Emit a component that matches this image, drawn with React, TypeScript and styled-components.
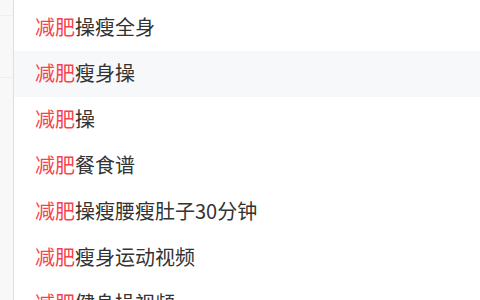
import React from "react";
import styled, { createGlobalStyle } from "styled-components";

const GlobalStyle = createGlobalStyle`
  html, body {
    margin: 0;
    padding: 0;
    background: #ffffff;
  }
  body {
    font-family: "Noto Sans CJK SC", "Noto Sans", sans-serif;
  }
`;

const Page = styled.div`
  display: flex;
  width: 480px;
  height: 300px;
  overflow: hidden;
`;

const SideStrip = styled.div`
  width: 13px;
  flex-shrink: 0;
  display: flex;
  flex-direction: column;
  background: #f8f8f9;
  border-right: 1px solid #dedfe2;
`;

const SideLine = styled.div<{ $h: number }>`
  height: ${(p) => p.$h}px;
  flex-shrink: 0;
  border-bottom: 1px solid #eeeff1;
`;

const Panel = styled.ul`
  flex: 1;
  margin: 0;
  padding: 5px 0 0 0;
  list-style: none;
  background: #ffffff;
`;

const Item = styled.li<{ $active?: boolean }>`
  display: flex;
  align-items: center;
  height: 46px;
  padding: 0 0 3px 21px;
  box-sizing: border-box;
  font-size: 20px;
  color: #333333;
  white-space: nowrap;
  background: ${(p) => (p.$active ? "#f7f8fa" : "transparent")};
`;

const Keyword = styled.span`
  color: #f5424e;
`;

const suggestions = [
  "操瘦全身",
  "瘦身操",
  "操",
  "餐食谱",
  "操瘦腰瘦肚子30分钟",
  "瘦身运动视频",
  "健身操视频",
];

const App: React.FC = () => {
  return (
    <Page>
      <GlobalStyle />
      <SideStrip>
        <SideLine $h={15} />
        <SideLine $h={61} />
      </SideStrip>
      <Panel>
        {suggestions.map((rest, i) => (
          <Item key={rest} $active={i === 1}>
            <Keyword>减肥</Keyword>
            {rest}
          </Item>
        ))}
      </Panel>
    </Page>
  );
};

export default App;
